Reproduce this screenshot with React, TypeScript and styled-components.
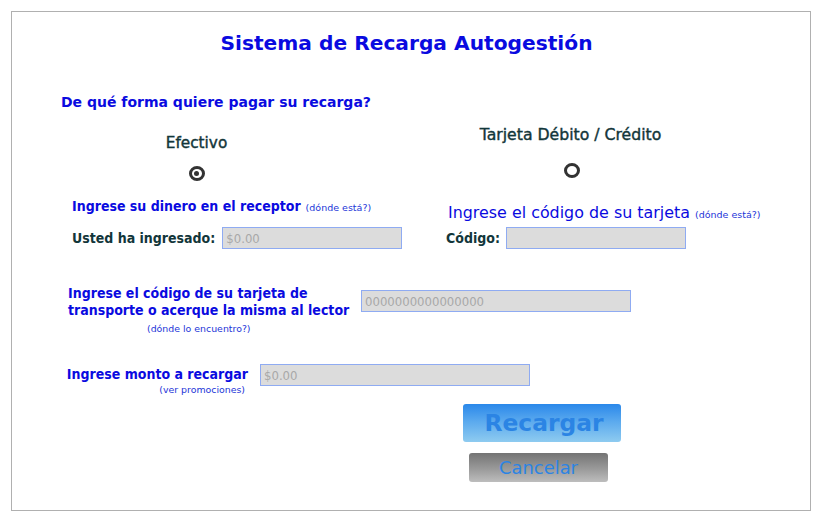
import styled, { createGlobalStyle } from "styled-components";

const GlobalStyle = createGlobalStyle`
  body {
    margin: 0;
    background: #ffffff;
    font-family: "DejaVu Sans", Verdana, sans-serif;
  }
`;

const BLUE = "#0a0ae0";
const DARK = "#12363a";
const LINK = "#1d35d8";

const Frame = styled.div`
  margin: 11px;
  width: 798px;
  height: 498px;
  border: 1px solid #b0b0b0;
  display: flex;
  flex-direction: column;
`;

const Title = styled.h1`
  margin: 19px 9px 0 0;
  font: bold 20.2px/24px "DejaVu Sans", sans-serif;
  color: ${BLUE};
  text-align: center;
`;

const Question = styled.h2`
  margin: 39px 0 0 49px;
  font: bold 14px/17px "DejaVu Sans", sans-serif;
  color: ${BLUE};
`;

const OptionsRow = styled.div`
  display: grid;
  grid-template-columns: 374px 1fr;
  padding-left: 60px;
  margin-top: 18px;
`;

const OptionColumn = styled.div<{ $shift: number }>`
  display: flex;
  flex-direction: column;
  margin-top: ${({ $shift }) => $shift}px;
`;

const OptionHeader = styled.div`
  width: 249px;
  display: flex;
  flex-direction: column;
  align-items: center;
`;

const OptionName = styled.div<{ $size: number }>`
  font: normal ${({ $size }) => $size}px/16px "DejaVu Sans", sans-serif;
  color: ${DARK};
  -webkit-text-stroke: 0.4px ${DARK};
`;

const Radio = styled.span<{ $checked?: boolean; $gap: number; $nudge: number }>`
  box-sizing: border-box;
  margin-top: ${({ $gap }) => $gap}px;
  margin-left: ${({ $nudge }) => $nudge}px;
  width: 16px;
  height: 15px;
  border: 3px solid #333333;
  border-radius: 50%;
  display: flex;
  align-items: center;
  justify-content: center;

  &::after {
    content: "";
    display: ${({ $checked }) => ($checked ? "block" : "none")};
    width: 5px;
    height: 5px;
    border-radius: 50%;
    background: #333333;
  }
`;

const Instruction = styled.div<{ $gap: number; $big?: boolean }>`
  margin-top: ${({ $gap }) => $gap}px;
  margin-left: ${({ $big }) => ($big ? 2 : 0)}px;
  color: ${BLUE};
  white-space: nowrap;
  font: ${({ $big }) =>
    $big
      ? `normal 15.9px/18px "DejaVu Sans", sans-serif`
      : `bold 14px/17px "DejaVu Sans Condensed", "DejaVu Sans", sans-serif`};
  font-stretch: ${({ $big }) => ($big ? "normal" : "condensed")};
`;

const SmallLink = styled.span`
  font: normal 9.5px/11px "DejaVu Sans", sans-serif;
  color: ${LINK};
  margin-left: 5px;
`;

const FieldRow = styled.div<{ $gap: number; $space: number }>`
  display: flex;
  align-items: center;
  gap: ${({ $space }) => $space}px;
  margin-top: ${({ $gap }) => $gap}px;
`;

const FieldLabel = styled.label`
  font: bold 14px/17px "DejaVu Sans Condensed", "DejaVu Sans", sans-serif;
  font-stretch: condensed;
  color: ${DARK};
  white-space: nowrap;
`;

const TextBox = styled.input<{ $width: number }>`
  box-sizing: border-box;
  width: ${({ $width }) => $width}px;
  height: 22px;
  margin: 0;
  padding: 0 3px;
  background: #dcdcdc;
  border: 1px solid #8fabf2;
  border-radius: 0;
  outline: none;
  font: 13px "Liberation Sans Narrow", "DejaVu Sans Condensed", sans-serif;
  font-stretch: condensed;
  color: #a8a8a8;

  &::placeholder {
    color: #a8a8a8;
  }
`;

const EntryRow = styled.div<{ $left: number; $top: number; $labelWidth: number }>`
  display: grid;
  grid-template-columns: ${({ $labelWidth }) => $labelWidth}px auto;
  column-gap: 12px;
  align-items: start;
  padding-left: ${({ $left }) => $left}px;
  margin-top: ${({ $top }) => $top}px;
`;

const EntryLabel = styled.div<{ $align: "left" | "right" }>`
  display: flex;
  flex-direction: column;
  align-items: ${({ $align }) => ($align === "right" ? "flex-end" : "flex-start")};
`;

const EntryText = styled.div`
  font: bold 14px/17px "DejaVu Sans Condensed", "DejaVu Sans", sans-serif;
  font-stretch: condensed;
  color: ${BLUE};
  white-space: nowrap;
`;

const EntryNote = styled.div<{ $indent: number; $gap: number }>`
  font: normal 9.4px/12px "DejaVu Sans", sans-serif;
  color: ${LINK};
  margin-top: ${({ $gap }) => $gap}px;
  margin-left: ${({ $indent }) => $indent}px;
  margin-right: ${({ $indent }) => ($indent ? 0 : 3)}px;
`;

const InputCell = styled.div<{ $offset: number }>`
  margin-top: ${({ $offset }) => $offset}px;
`;

const Actions = styled.div`
  display: flex;
  flex-direction: column;
  align-items: flex-start;
  padding-left: 451px;
  margin-top: 8px;
  gap: 11px;
`;

const Button = styled.button<{ $primary?: boolean }>`
  box-sizing: border-box;
  margin: 0 0 0 ${({ $primary }) => ($primary ? 0 : 6)}px;
  padding: 0 0 0 ${({ $primary }) => ($primary ? 4 : 0)}px;
  width: ${({ $primary }) => ($primary ? 158 : 139)}px;
  height: ${({ $primary }) => ($primary ? 38 : 29)}px;
  border: none;
  border-radius: 3px;
  background: ${({ $primary }) =>
    $primary
      ? "linear-gradient(to bottom, #2a88ea 0%, #5aa9ee 45%, #8ecbf0 100%)"
      : "linear-gradient(to bottom, #747474 0%, #9a9a9a 55%, #bdbdbd 100%)"};
  color: #2b84e4;
  font: ${({ $primary }) =>
    $primary
      ? `bold 23.4px/38px "DejaVu Sans", sans-serif`
      : `normal 17.9px/29px "DejaVu Sans", sans-serif`};
  cursor: pointer;
`;

const App = () => {
  return (
    <>
      <GlobalStyle />
      <Frame>
        <Title>Sistema de Recarga Autogestión</Title>
        <Question>De qué forma quiere pagar su recarga?</Question>

        <OptionsRow>
          <OptionColumn $shift={6}>
            <OptionHeader>
              <OptionName $size={15.3}>Efectivo</OptionName>
              <Radio $checked $gap={15} $nudge={0} />
            </OptionHeader>
            <Instruction $gap={17}>
              Ingrese su dinero en el receptor
              <SmallLink>(dónde está?)</SmallLink>
            </Instruction>
            <FieldRow $gap={12} $space={7}>
              <FieldLabel>Usted ha ingresado:</FieldLabel>
              <TextBox $width={180} placeholder="$0.00" readOnly />
            </FieldRow>
          </OptionColumn>

          <OptionColumn $shift={-2}>
            <OptionHeader>
              <OptionName $size={15.7}>Tarjeta Débito / Crédito</OptionName>
              <Radio $gap={20} $nudge={3} />
            </OptionHeader>
            <Instruction $gap={26} $big>
              Ingrese el código de su tarjeta
              <SmallLink>(dónde está?)</SmallLink>
            </Instruction>
            <FieldRow $gap={5} $space={6}>
              <FieldLabel>Código:</FieldLabel>
              <TextBox $width={180} readOnly />
            </FieldRow>
          </OptionColumn>
        </OptionsRow>

        <EntryRow $left={56} $top={36} $labelWidth={281}>
          <EntryLabel $align="left">
            <EntryText>Ingrese el código de su tarjeta de</EntryText>
            <EntryText>transporte o acerque la misma al lector</EntryText>
            <EntryNote $indent={79} $gap={4}>
              (dónde lo encuentro?)
            </EntryNote>
          </EntryLabel>
          <InputCell $offset={5}>
            <TextBox $width={270} placeholder="0000000000000000" readOnly />
          </InputCell>
        </EntryRow>

        <EntryRow $left={55} $top={31} $labelWidth={181}>
          <EntryLabel $align="right">
            <EntryText>Ingrese monto a recargar</EntryText>
            <EntryNote $indent={0} $gap={1}>
              (ver promociones)
            </EntryNote>
          </EntryLabel>
          <InputCell $offset={-2}>
            <TextBox $width={270} placeholder="$0.00" readOnly />
          </InputCell>
        </EntryRow>

        <Actions>
          <Button $primary>Recargar</Button>
          <Button>Cancelar</Button>
        </Actions>
      </Frame>
    </>
  );
};

export default App;
